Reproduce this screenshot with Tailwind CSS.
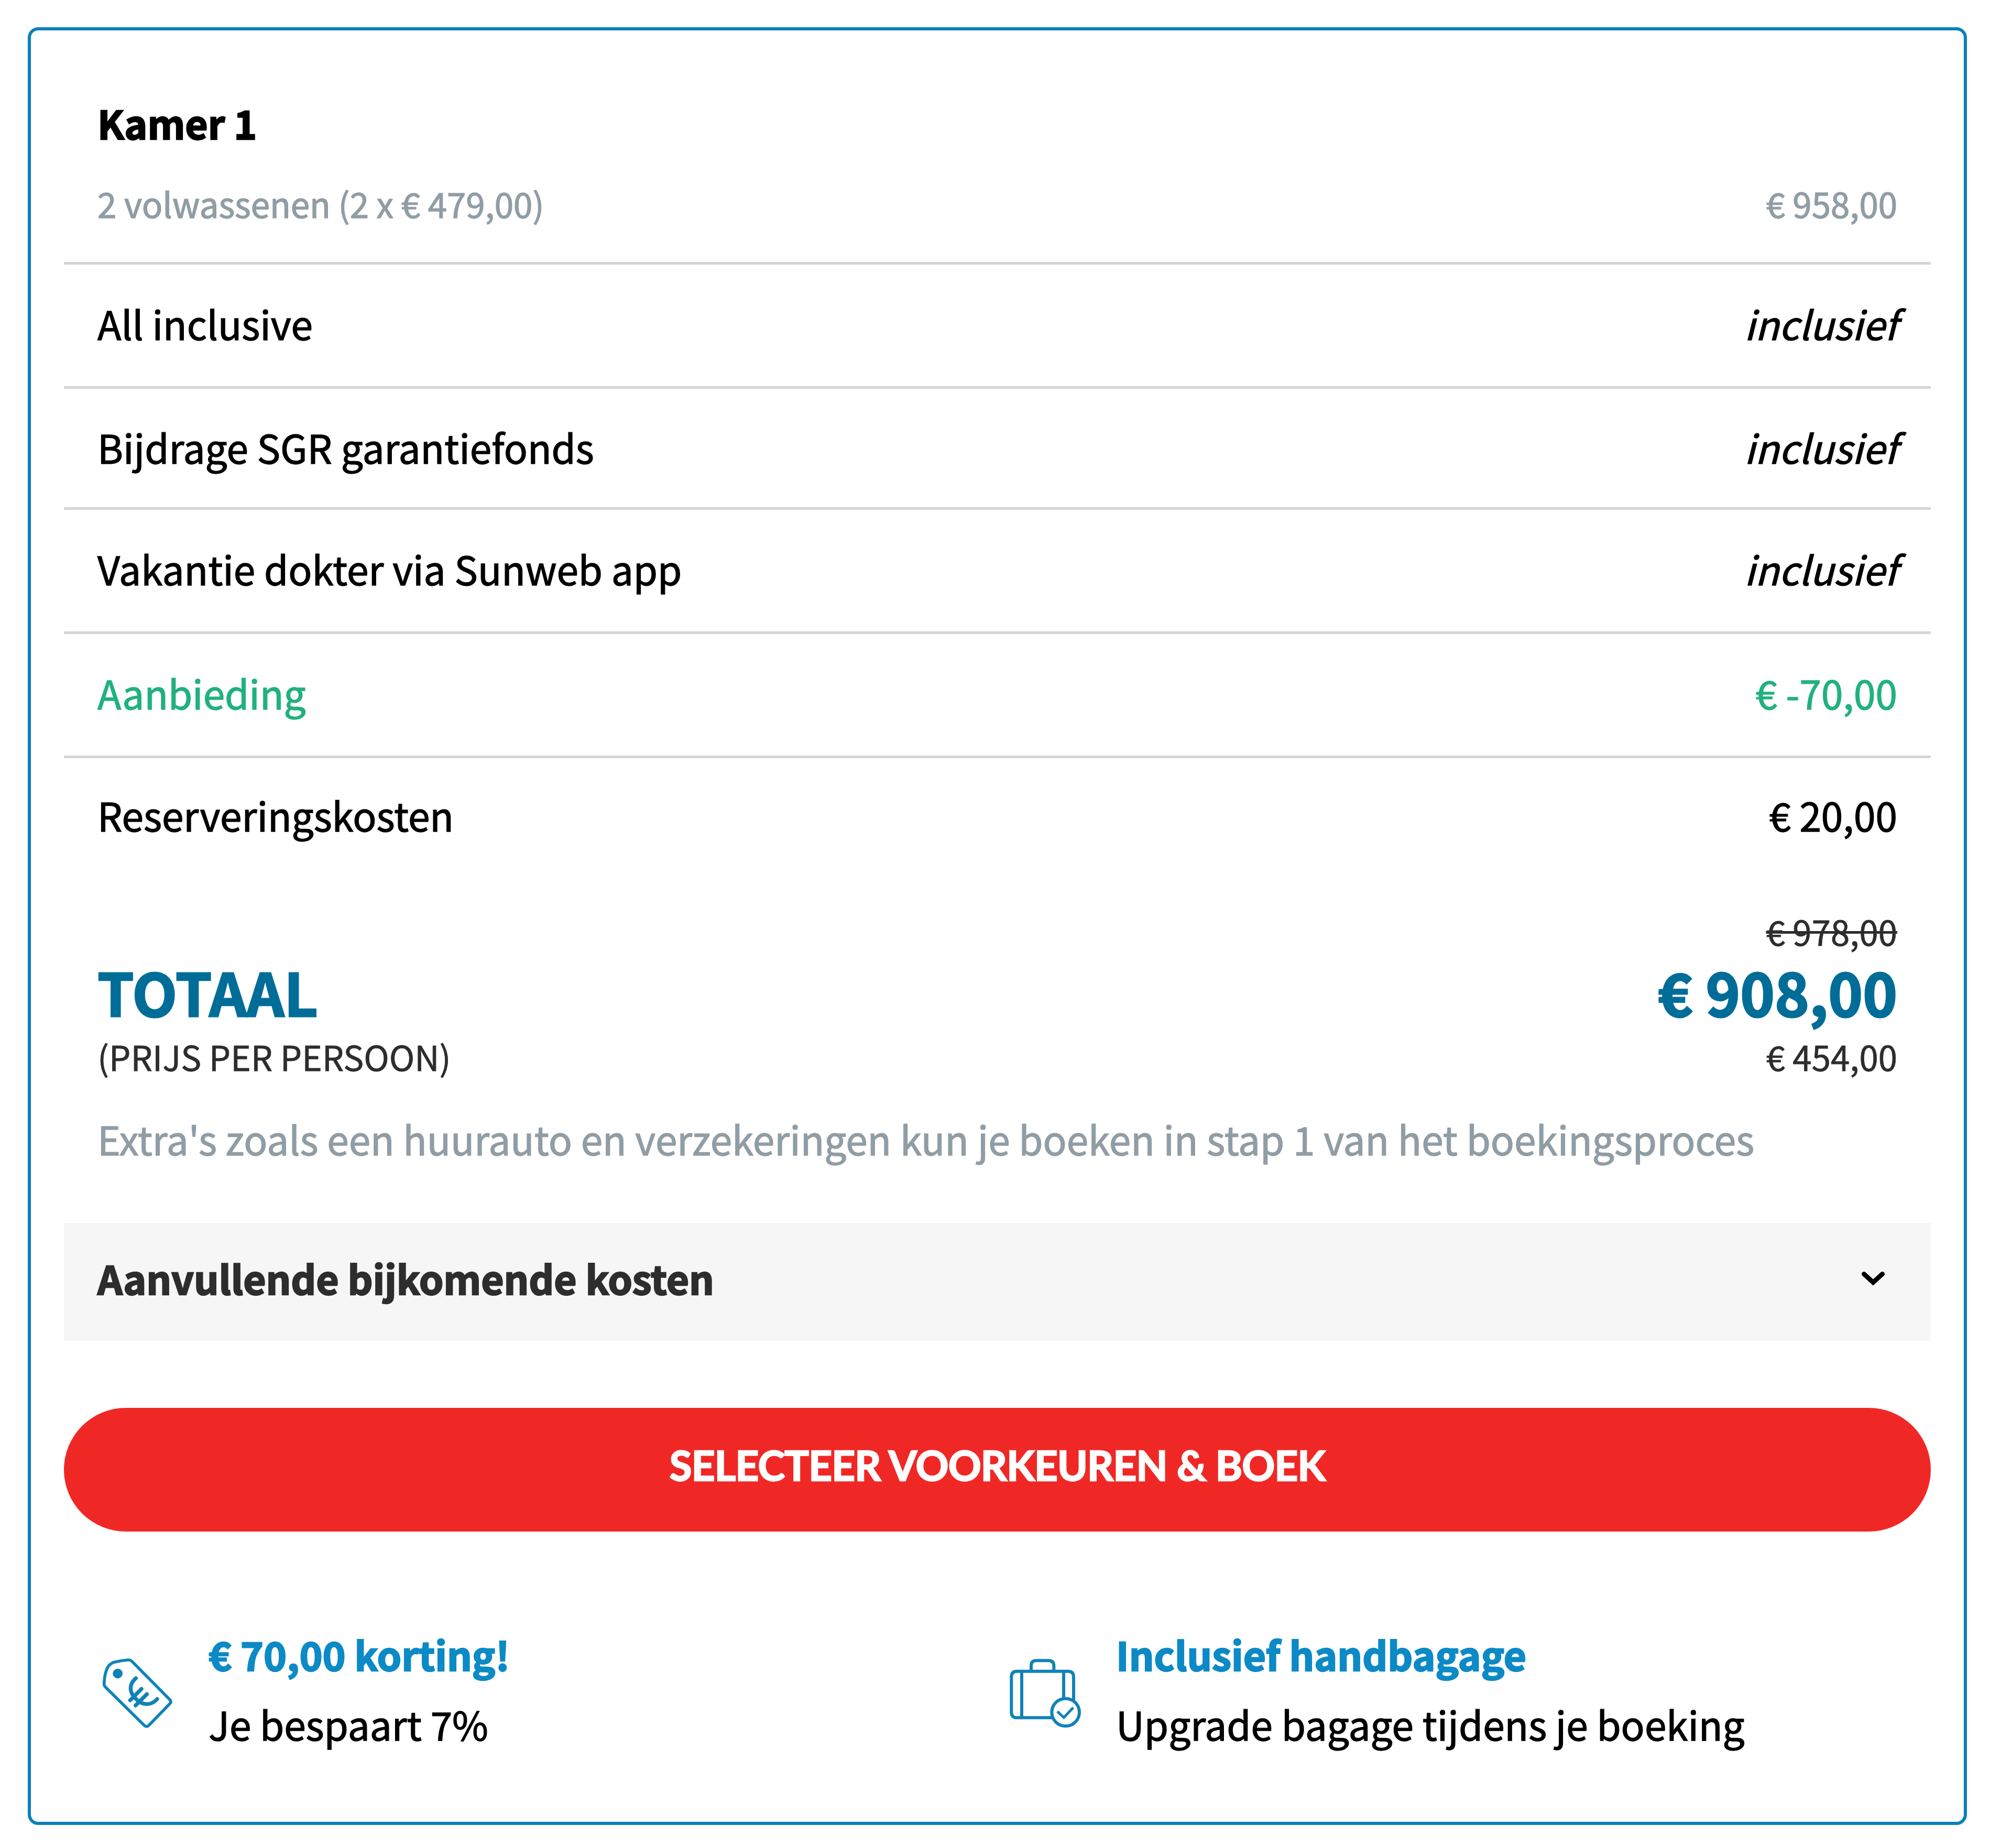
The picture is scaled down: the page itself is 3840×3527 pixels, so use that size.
<!DOCTYPE html>
<html lang="nl">
  <head>
    <meta charset="UTF-8" />
    <meta name="viewport" content="width=device-width, initial-scale=1.0" />
    <title>Prijsoverzicht</title>
    <script src="https://cdn.jsdelivr.net/npm/@tailwindcss/browser@4"></script>
  </head>
  <body class="bg-white pt-[52px] pl-[53px] font-['Noto_Sans_CJK_SC',sans-serif] text-[74.7px] leading-[112px] text-black [-webkit-text-stroke:1.3px]">
    <main class="w-[3701px] h-[3431px] border-6 border-[#0a80bc] rounded-[20px] px-[63px]">
      <!-- Kamer -->
      <header class="pt-[120px] pb-16 pl-16 pr-16">
        <h2 class="font-bold [-webkit-text-stroke:2.4px]">Kamer 1</h2>
        <div class="mt-[50px] flex justify-between text-[65.4px] leading-[96px] text-[#919da5]">
          <span>2 volwassenen (2 x € 479,00)</span>
          <span>€ 958,00</span>
        </div>
      </header>

      <!-- Prijsregels -->
      <ul>
        <li class="h-[237px] flex items-center justify-between border-t-5 border-[#d4d4d4] pb-2 pl-16 pr-16">
          <span>All inclusive</span>
          <em>inclusief</em>
        </li>
        <li class="h-[231px] flex items-center justify-between border-t-5 border-[#d4d4d4] pb-1 pl-16 pr-16">
          <span>Bijdrage SGR garantiefonds</span>
          <em>inclusief</em>
        </li>
        <li class="h-[237px] flex items-center justify-between border-t-5 border-[#d4d4d4] pb-2 pl-16 pr-16">
          <span>Vakantie dokter via Sunweb app</span>
          <em>inclusief</em>
        </li>
        <li class="h-[237px] flex items-center justify-between border-t-5 border-[#d4d4d4] pb-2 pl-16 pr-16 text-[#21b17e]">
          <span>Aanbieding</span>
          <span>€ -70,00</span>
        </li>
        <li class="h-[228px] flex items-center justify-between border-t-5 border-[#d4d4d4] pb-2 pl-16 pr-16">
          <span>Reserveringskosten</span>
          <span>€ 20,00</span>
        </li>
      </ul>

      <!-- Totaal -->
      <section class="pt-[59px] pl-16 pr-16">
        <div class="flex items-end justify-between text-[65.4px] text-[#2d2d2d] [-webkit-text-stroke:0.8px]">
          <div>
            <p class="text-[111.6px] leading-[134px] font-bold text-[#006d99] [-webkit-text-stroke:3px]">TOTAAL</p>
            <p class="leading-[113px] pb-0.5">(PRIJS PER PERSOON)</p>
          </div>
          <div class="text-right">
            <p class="leading-[96px] line-through decoration-5">€ 978,00</p>
            <p class="text-[111.6px] leading-[134px] font-bold text-[#006d99] [-webkit-text-stroke:3px]">€ 908,00</p>
            <p class="leading-[113px] pb-0.5">€ 454,00</p>
          </div>
        </div>
        <p class="mt-[43px] whitespace-nowrap text-[#919da5]">Extra's zoals een huurauto en verzekeringen kun je boeken in stap 1 van het boekingsproces</p>
      </section>

      <div class="mt-[105px] h-[225px] flex items-center justify-between bg-[#f6f6f6] pb-4 pl-16 pr-[88px] font-bold text-[#2d2d2d] [-webkit-text-stroke:2.4px]">
        <span class="tracking-[-0.1px]">Aanvullende bijkomende kosten</span>
        <svg class="w-11 h-7 mt-1" viewBox="0 0 44 28" fill="none" stroke="#000" stroke-width="9" stroke-linecap="round" stroke-linejoin="miter">
          <path d="M4.5 4.5 22 20.5 39.5 4.5" />
        </svg>
      </div>

      <button class="mt-32 w-full h-[236px] flex items-center justify-center rounded-full bg-[#f02825] pb-[18px] font-['Lato',sans-serif] text-[78px] tracking-[-0.8px] font-bold text-white [-webkit-text-stroke:2.4px]">SELECTEER VOORKEUREN &amp; BOEK</button>

      <!-- Voordelen -->
      <section class="mt-[167px] pl-[58px] grid grid-cols-[1731px_1fr] leading-[133px]">
        <div class="flex gap-12">
          <svg class="w-[170px] h-[170px] mt-[58px]" viewBox="0 0 510 510" fill="none" stroke="#0f83b8" stroke-width="17" stroke-linecap="round" stroke-linejoin="round">
            <path d="M110 74Q150 63 195 60Q208 60 217 70L432 287Q443 299 432 311L312 435Q300 447 286 435L65 217Q55 208 56 195Q58 145 72 112Q83 85 110 74Z" />
            <circle cx="134" cy="138" r="28" fill="#0f83b8" stroke="none" />
            <path stroke-width="22" d="M238 165C197 200 199 245 237 282C273 321 324 325 360 284M270 226 205 291M301 256 236 321" />
          </svg>
          <div>
            <h3 class="font-bold text-[#0c8ac6] [-webkit-text-stroke:2.4px]">€ 70,00 korting!</h3>
            <p>Je bespaart 7%</p>
          </div>
        </div>
        <div class="flex gap-[49px]">
          <svg class="w-[170px] h-[170px] mt-[58px]" viewBox="0 0 510 510" fill="none" stroke="#0f83b8" stroke-width="18" stroke-linecap="round" stroke-linejoin="round">
            <path d="M290 391H90Q58 391 58 359V157Q58 125 90 125H382Q414 125 414 157V290" />
            <path d="M171 125V93Q171 64 200 64H270Q301 64 301 93V125M117 125V391M357 125V276" />
            <circle cx="368" cy="360" r="79" />
            <path stroke-width="15" stroke-linecap="butt" stroke-linejoin="miter" d="M321 355 358 390 412 333" />
          </svg>
          <div>
            <h3 class="font-bold text-[#0c8ac6] [-webkit-text-stroke:2.4px]">Inclusief handbagage</h3>
            <p>Upgrade bagage tijdens je boeking</p>
          </div>
        </div>
      </section>
    </main>
  </body>
</html>
